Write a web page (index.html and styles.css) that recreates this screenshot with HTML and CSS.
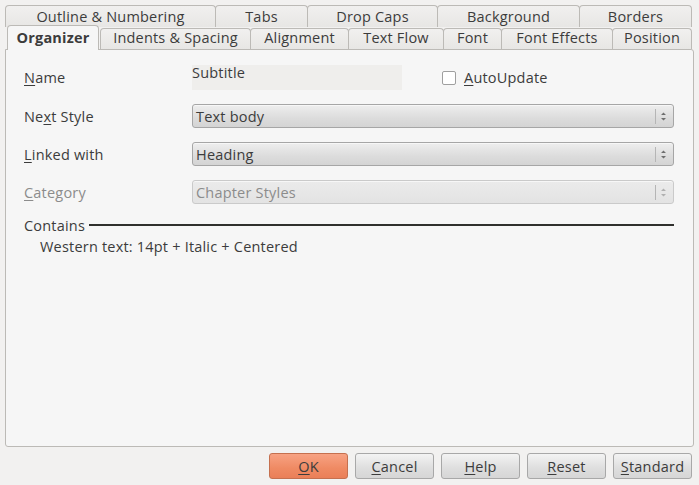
FILE: index.html
```html
<!DOCTYPE html>
<html>
<head>
<meta charset="utf-8">
<link rel="stylesheet" href="styles.css">
</head>
<body>
<div class="dialog">
  <div class="tabs">
    <div class="row row1">
      <div class="tab w-outline">Outline &amp; Numbering</div>
      <div class="tab w-tabs">Tabs</div>
      <div class="tab w-drop">Drop Caps</div>
      <div class="tab w-bg">Background</div>
      <div class="tab w-borders">Borders</div>
    </div>
    <div class="row row2">
      <div class="tab sel w-org">Organizer</div>
      <div class="tab w-indents">Indents &amp; Spacing</div>
      <div class="tab w-align">Alignment</div>
      <div class="tab w-flow">Text Flow</div>
      <div class="tab w-font">Font</div>
      <div class="tab w-effects">Font Effects</div>
      <div class="tab w-pos">Position</div>
    </div>
  </div>
  <div class="panel">
    <div class="form">
      <div class="label name-label"><u>N</u>ame</div>
      <div class="name-row">
        <div class="namefield">Subtitle</div>
        <label class="check"><span class="box"></span><span><u>A</u>utoUpdate</span></label>
      </div>
      <div class="label">Ne<u>x</u>t Style</div>
      <div class="select"><span>Text body</span><span class="spin"><span class="sep"></span><svg width="7" height="11" viewBox="0 0 7 11"><path d="M1 4 L3.5 1.5 L6 4 Z M1 7 L3.5 9.5 L6 7 Z" fill="#6e6e6e"/></svg></span></div>
      <div class="label"><u>L</u>inked with</div>
      <div class="select"><span>Heading</span><span class="spin"><span class="sep"></span><svg width="7" height="11" viewBox="0 0 7 11"><path d="M1 4 L3.5 1.5 L6 4 Z M1 7 L3.5 9.5 L6 7 Z" fill="#6e6e6e"/></svg></span></div>
      <div class="label disabled"><u>C</u>ategory</div>
      <div class="select dis"><span>Chapter Styles</span><span class="spin"><span class="sep"></span><svg width="7" height="11" viewBox="0 0 7 11"><path d="M1 4 L3.5 1.5 L6 4 Z M1 7 L3.5 9.5 L6 7 Z" fill="#b0b0b0"/></svg></span></div>
    </div>
    <div class="contains">
      <span>Contains</span><span class="rule"></span>
    </div>
    <div class="desc">Western text: 14pt + Italic + Centered</div>
  </div>
  <div class="buttons">
    <button class="btn ok"><u>O</u>K</button>
    <button class="btn"><u>C</u>ancel</button>
    <button class="btn"><u>H</u>elp</button>
    <button class="btn"><u>R</u>eset</button>
    <button class="btn"><u>S</u>tandard</button>
  </div>
</div>
</body>
</html>
```

FILE: styles.css
```css
html, body {
  margin: 0;
  padding: 0;
  background: #f2f1f0;
}
body {
  font-family: "Open Sans", "DejaVu Sans", sans-serif;
  font-size: 14.5px;
  letter-spacing: 0.2px;
  color: #3c3c3c;
  width: 699px;
  height: 485px;
  overflow: hidden;
}
u {
  text-decoration: underline;
  text-underline-offset: 2px;
}
.dialog {
  padding: 5px 5px 0 5px;
}
.tabs {
  display: flex;
  flex-direction: column;
}
.row {
  display: flex;
  align-items: flex-end;
}
.row1 {
  height: 22px;
}
.row2 {
  height: 23px;
  margin-top: -1px;
  padding-left: 2px;
  position: relative;
  z-index: 1;
}
.tab {
  box-sizing: border-box;
  border: 1px solid #bcbab6;
  border-bottom: none;
  border-radius: 4px 4px 0 0;
  background: linear-gradient(#f1f0ef, #e7e6e4);
  display: flex;
  align-items: center;
  justify-content: center;
  white-space: nowrap;
  margin-right: -1px;
}
.row1 .tab {
  height: 22px;
  padding-bottom: 1px;
}
.row2 .tab {
  height: 21px;
  padding-bottom: 3px;
}
.row2 .tab.sel {
  height: 25px;
  background: #f6f6f6;
  font-weight: bold;
  margin-right: 1px;
  margin-bottom: -1px;
  padding-bottom: 2px;
}
.w-outline { width: 211px; }
.w-tabs { width: 93px; }
.w-drop { width: 131px; }
.w-bg { width: 143px; }
.w-borders { width: 113px; }
.w-org { width: 92px; }
.w-indents { width: 151px; }
.w-align { width: 99px; }
.w-flow { width: 96px; }
.w-font { width: 59px; }
.w-effects { width: 112px; }
.w-pos { width: 80px; }

.panel {
  box-sizing: border-box;
  height: 398px;
  border: 1px solid #bcbab6;
  border-radius: 0 3px 3px 3px;
  background: #f6f6f6;
  padding: 15px 19px 0 18px;
}
.form {
  display: grid;
  grid-template-columns: 168px 1fr;
  grid-template-rows: 25px 24px 24px 24px;
  row-gap: 14px;
  align-items: center;
}
.label.disabled {
  color: #8c8c8c;
}
.name-row {
  display: flex;
  align-items: center;
  height: 25px;
}
.namefield {
  box-sizing: border-box;
  width: 210px;
  height: 25px;
  background: #efeeec;
  line-height: 16px;
}
.check {
  display: flex;
  align-items: center;
  margin-left: 40px;
  gap: 8px;
}
.box {
  box-sizing: border-box;
  width: 14px;
  height: 14px;
  border: 1px solid #9f9f9f;
  border-radius: 2px;
  background: #ffffff;
}
.select {
  box-sizing: border-box;
  height: 24px;
  border: 1px solid #a6a6a6;
  border-radius: 3px;
  background: linear-gradient(#eeeeee, #dcdcdc 60%, #d4d4d4);
  box-shadow: inset 0 1px 0 #f7f7f7;
  display: flex;
  align-items: center;
  justify-content: space-between;
  padding: 0 0 0 3px;
  color: #3c3c3c;
}
.select.dis {
  border-color: #cacaca;
  background: linear-gradient(#ebebeb, #e3e3e3);
  color: #8c8c8c;
}
.spin {
  display: flex;
  align-items: center;
  height: 100%;
  gap: 4px;
  padding-right: 6px;
}
.sep {
  width: 1px;
  height: 15px;
  background: #b5b5b5;
}
.contains {
  display: flex;
  align-items: center;
  margin-top: 12px;
  height: 18px;
}
.rule {
  flex: 1;
  height: 2px;
  background: #2f302d;
  margin-left: 4px;
}
.desc {
  padding-left: 16px;
  margin-top: 3px;
}
.buttons {
  display: flex;
  justify-content: flex-end;
  gap: 7px;
  padding-top: 6px;
  padding-right: 2px;
}
.btn {
  box-sizing: border-box;
  height: 26px;
  width: 79px;
  font-family: inherit;
  font-size: 14.5px;
  letter-spacing: 0.2px;
  color: #3c3c3c;
  border: 1px solid #a8a8a8;
  border-radius: 3px;
  background: linear-gradient(#f3f3f3, #dedede 60%, #d6d6d6);
  padding: 0;
}
.btn.ok {
  border-color: #c5704f;
  background: linear-gradient(#f7a283, #ef8a63 60%, #ea7f58);
}
```
